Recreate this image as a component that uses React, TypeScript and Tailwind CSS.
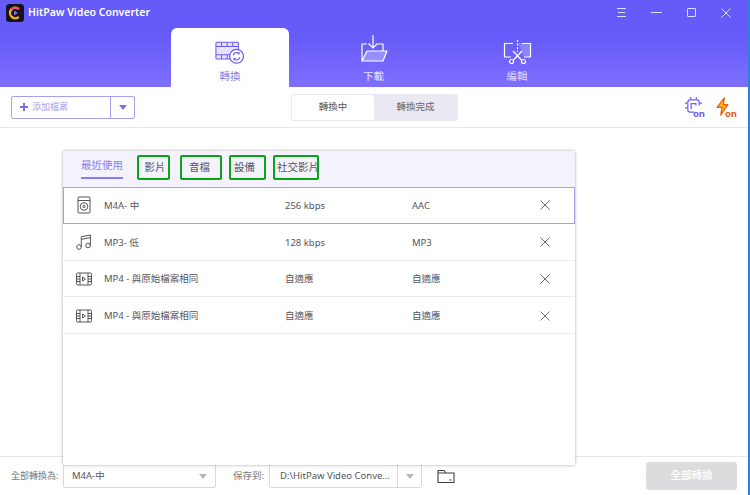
import React from "react";

const font = { fontFamily: '"Noto Sans", "Noto Sans CJK TC", sans-serif' };

function Logo() {
  return (
    <svg width="18" height="18" viewBox="0 0 18 18">
      <rect width="18" height="18" rx="3.5" fill="#15131c" />
      <path d="M12.8 5.2A5.2 5.2 0 1 0 12.8 12.8" fill="none" stroke="#f6b21b" strokeWidth="2.4" />
      <path d="M12.8 5.2A5.2 5.2 0 0 0 5 5.6" fill="none" stroke="#ef4a6a" strokeWidth="2.4" />
      <path d="M8 6.6L12 9L8 11.4Z" fill="#8a6cff" />
    </svg>
  );
}

function ConvertIcon() {
  return (
    <svg width="30" height="25" viewBox="0 0 32 26" fill="none" stroke="#6a5cf0" strokeWidth="1.1">
      <rect x="1" y="2" width="24" height="18" rx="1" fill="#e6e3fd" />
      <path d="M1 6.5H25M1 15.5H25M7 2V6.5M13 2V6.5M19 2V6.5M7 15.5V20M13 15.5V20" />
      <circle cx="23" cy="17" r="7.4" fill="#fff" strokeWidth="1.4" />
      <path d="M19.5 16a3.6 3.6 0 0 1 6.2-1.8M26.5 18a3.6 3.6 0 0 1-6.2 1.8" strokeWidth="1.2" />
      <path d="M25.8 12.5V14.6H23.8M20.2 21.5V19.4H22.2" strokeWidth="1" />
    </svg>
  );
}

function DownloadIcon() {
  return (
    <svg width="28" height="28" viewBox="0 0 28 28" fill="none" stroke="#fff" strokeWidth="1.2">
      <path d="M7 16H27L23 26H2Z" fill="#fff" fillOpacity="0.28" stroke="none" />
      <path d="M13 0V13M8.5 8.5L13 13L17.5 8.5" />
      <path d="M7 9H2V26H23L27 16H7L2 26" strokeLinejoin="round" />
      <path d="M18 9H23V16" />
    </svg>
  );
}

function EditIcon() {
  return (
    <svg width="29" height="26" viewBox="0 0 29 26" fill="none" stroke="#fff" strokeWidth="1.2">
      <path d="M15 4H28V18H21" fill="#fff" fillOpacity="0.22" stroke="none" />
      <path d="M10 4.5H1.5V18H8M19 4.5H27.5V18H21" />
      <path d="M14.5 1V13" strokeDasharray="2 1.6" />
      <path d="M10 12L18.5 21M19 12L10.5 21" />
      <circle cx="8.5" cy="22.5" r="2" />
      <circle cx="20.5" cy="22.5" r="2" />
    </svg>
  );
}

function ChipOn() {
  return (
    <div className="relative h-[24px] w-[21px]">
      <svg width="19" height="19" viewBox="0 0 20 20" fill="none" stroke="#6d5ff0" strokeWidth="1.3" className="absolute left-0 top-[1px]">
        <path d="M11 17H6.5A2.5 2.5 0 0 1 4 14.5V6.5A2.5 2.5 0 0 1 6.5 4H13.5A2.5 2.5 0 0 1 16 6.5V10" />
        <path d="M7.5 14V8H12.5V10M7 1V3.5M13 1V3.5M1 7.5H3.5M1 12.5H3.5M16.5 7.5H19" />
      </svg>
      <span className="absolute bottom-[1px] right-0 text-[9.5px] font-bold leading-none text-[#6d5ff0]">on</span>
    </div>
  );
}

function BoltOn() {
  return (
    <div className="relative h-[24px] w-[21px]">
      <svg width="13" height="19" viewBox="0 0 14 21" className="absolute left-0 top-[2px]">
        <path d="M9 1L1 11.5H6.5L5 20L13 8.5H8Z" fill="#fbb317" stroke="#f0590f" strokeWidth="1.3" strokeLinejoin="round" />
      </svg>
      <span className="absolute bottom-[1px] right-0 text-[9.5px] font-bold leading-none text-[#ee5a0e]">on</span>
    </div>
  );
}

function DiscIcon() {
  return (
    <svg width="14" height="18" viewBox="0 0 14 18" fill="none" stroke="#55555c" strokeWidth="1">
      <rect x="1" y="1" width="12" height="16" rx="1" />
      <path d="M1 4.5H13" />
      <circle cx="7" cy="10.5" r="3.8" />
      <circle cx="7" cy="10.5" r="1.1" />
    </svg>
  );
}

function MusicIcon() {
  return (
    <svg width="16" height="16" viewBox="0 0 16 16" fill="none" stroke="#55555c" strokeWidth="1">
      <circle cx="3" cy="13" r="2.3" />
      <circle cx="12" cy="11.5" r="2.3" />
      <path d="M5.3 13V2.8L14.4 1V11.5M5.3 5.4L14.4 3.6" />
    </svg>
  );
}

function VideoIcon() {
  return (
    <svg width="16" height="14" viewBox="0 0 16 14" fill="none" stroke="#55555c" strokeWidth="1">
      <rect x="0.5" y="1" width="15" height="12" rx="1.2" />
      <path d="M4 1V13M12 1V13M0.5 4.5H4M0.5 7H4M0.5 9.5H4M12 4.5H15.5M12 7H15.5M12 9.5H15.5" />
      <path d="M6.5 5L9.5 7L6.5 9Z" />
    </svg>
  );
}

function CloseIcon({ color = "#6b6b70", size = 10 }: { color?: string; size?: number }) {
  return (
    <svg width={size} height={size} viewBox="0 0 10 10" stroke={color} strokeWidth="1">
      <path d="M0.5 0.5L9.5 9.5M9.5 0.5L0.5 9.5" />
    </svg>
  );
}

function Caret({ color = "#9a9aa0" }: { color?: string }) {
  return (
    <svg width="8" height="5" viewBox="0 0 8 5">
      <path d="M0 0H8L4 5Z" fill={color} />
    </svg>
  );
}

const rows = [
  { icon: <DiscIcon />, name: "M4A- 中", rate: "256 kbps", codec: "AAC", active: true },
  { icon: <MusicIcon />, name: "MP3- 低", rate: "128 kbps", codec: "MP3" },
  { icon: <VideoIcon />, name: "MP4 - 與原始檔案相同", rate: "自適應", codec: "自適應" },
  { icon: <VideoIcon />, name: "MP4 - 與原始檔案相同", rate: "自適應", codec: "自適應" },
];

export default function App() {
  return (
    <div style={font} className="relative flex h-[495px] w-[750px] flex-col overflow-hidden border-r-2 border-[#2f80d8] bg-white">
      <header className="flex h-[87px] flex-col bg-gradient-to-b from-[#665af9] from-40% to-[#7f6fff]">
        <div className="mb-[3px] flex h-[25px] items-center pl-[6px]">
          <Logo />
          <span className="ml-[4px] text-[10.5px] font-semibold text-white">HitPaw Video Converter</span>
          <div className="ml-auto flex items-center">
            <div className="flex w-[35px] flex-col items-center gap-[3px] opacity-80">
              <span className="h-px w-[9px] self-center bg-white" />
              <span className="h-px w-[7px] self-center bg-white" />
              <span className="h-px w-[9px] self-center bg-white" />
            </div>
            <div className="flex w-[35px] justify-center opacity-80"><span className="h-px w-[11px] bg-white" /></div>
            <div className="flex w-[35px] justify-center opacity-80"><span className="h-[9px] w-[9px] rounded-[1px] border border-white" /></div>
            <div className="flex w-[35px] justify-center pr-px opacity-80"><CloseIcon color="#ffffff" /></div>
            <span className="w-[4px]" />
          </div>
        </div>
        <nav className="flex flex-1 gap-[25.5px] pl-[171px]">
          <div className="flex w-[118px] flex-col items-center rounded-t-[6px] bg-white pt-[12px]">
            <ConvertIcon />
            <span className="mt-[4px] text-[10.5px] leading-[14px] text-[#8a7fe8]">轉換</span>
          </div>
          <div className="flex w-[118px] flex-col items-center pt-[7px]">
            <DownloadIcon />
            <span className="mt-[6px] text-[10.5px] leading-[14px] text-white/80">下載</span>
          </div>
          <div className="flex w-[118px] flex-col items-center pt-[11px]">
            <EditIcon />
            <span className="mt-[4px] text-[10.5px] leading-[14px] text-white/75">編輯</span>
          </div>
        </nav>
      </header>

      <div className="flex h-[41px] items-center border-b border-[#e6e6e9] pl-[11px]">
        <div className="flex h-[23px] w-[124px] rounded-[2px] border border-[#a79ff0]">
          <div className="flex flex-1 items-center gap-[4px] border-r border-[#a79ff0] pl-[8px]">
            <span className="relative h-[8px] w-[8px]">
              <span className="absolute left-0 top-[3px] h-[2px] w-[8px] bg-[#7b6ee8]" />
              <span className="absolute left-[3px] top-0 h-[8px] w-[2px] bg-[#7b6ee8]" />
            </span>
            <span className="text-[9px] text-[#a7a0ea]">添加檔案</span>
          </div>
          <div className="flex w-[23px] items-center justify-center"><Caret color="#7b6ee8" /></div>
        </div>
        <div className="ml-[156px] flex h-[27px] w-[167px] rounded-[3px] bg-[#e9e8f3] p-px">
          <div className="flex w-[82px] items-center justify-center rounded-[2px] bg-white text-[9.5px] text-[#55555c]">轉換中</div>
          <div className="flex flex-1 items-center justify-center text-[9.5px] text-[#66666c]">轉換完成</div>
        </div>
        <div className="ml-auto flex gap-[11px] pr-[11px]">
          <ChipOn />
          <BoltOn />
        </div>
      </div>

      <div className="flex-1" />

      <footer className="flex h-[39px] items-center border-t border-[#e6e6e9] pl-[11px]">
        <span className="w-[52px] text-[9px] text-[#77777c]">全部轉換為:</span>
        <div className="flex h-[24px] w-[153px] items-center rounded-[2px] border border-[#d9d9dc] px-[8px] text-[9.5px] text-[#55555c]">
          M4A-中
          <span className="ml-auto"><Caret color="#b5b5ba" /></span>
        </div>
        <span className="ml-[17px] w-[36px] text-[9.5px] text-[#77777c]">保存到:</span>
        <div className="flex h-[24px] w-[153px] items-center rounded-[2px] border border-[#d9d9dc] text-[9.5px] text-[#55555c]">
          <span className="flex-1 truncate pl-[10px]">D:\HitPaw Video Conve...</span>
          <span className="flex h-full w-[24px] shrink-0 items-center justify-center border-l border-[#d9d9dc]"><Caret color="#b5b5ba" /></span>
        </div>
        <svg width="18" height="15" viewBox="0 0 18 15" fill="none" stroke="#3f3f45" strokeWidth="1.1" className="ml-[15px]">
          <path d="M1 13.5V1.5H7L9 4H17V13.5Z" />
          <path d="M1 4H9M12.5 11H14.5" />
        </svg>
        <button className="ml-auto mr-[11px] h-[28px] w-[91px] rounded-[3px] bg-[#dcdcde] text-[10.5px] font-medium text-white">全部轉換</button>
      </footer>

      <section className="absolute left-[63px] top-[151px] flex h-[314px] w-[512px] flex-col bg-white shadow-[0_0_3px_rgba(0,0,0,0.35)]">
        <div className="relative flex h-[36px] shrink-0 items-start bg-[#f3f2fd] pt-[4px] text-[10.5px] text-[#55555c]">
          <span className="ml-[18px] flex h-[24px] flex-col items-center justify-center border-b-2 border-[#8a7cf2] text-[#8a7cf2]">最近使用</span>
          <span className="ml-[14px] flex h-[25px] w-[33px] items-center justify-center rounded-[2px] border-2 border-[#0aa515] pl-[3px]">影片</span>
          <span className="ml-[10px] flex h-[25px] w-[42px] items-center justify-center rounded-[2px] border-2 border-[#0aa515] pr-[3px]">音檔</span>
          <span className="ml-[7px] flex h-[25px] w-[37px] items-center justify-center rounded-[2px] border-2 border-[#0aa515] pr-[6px]">設備</span>
          <span className="ml-[7px] flex h-[25px] w-[46px] items-center justify-start whitespace-nowrap rounded-[2px] border-2 border-[#0aa515] pl-[2px]">社交影片</span>
        </div>
        {rows.map((r, i) => (
          <div
            key={i}
            className={
              "flex h-[36.8px] shrink-0 items-center border text-[9.5px] text-[#55555c] " +
              (r.active ? "border-[#a99fe6]" : "border-x-transparent border-t-transparent border-b-[#ececef]")
            }
          >
            <span className="flex w-[40px] shrink-0 justify-center">{r.icon}</span>
            <span className="w-[181px] shrink-0 pt-[1px]">{r.name}</span>
            <span className="w-[127px] shrink-0 pt-[1px]">{r.rate}</span>
            <span className="w-[128px] shrink-0 pt-[1px]">{r.codec}</span>
            <CloseIcon />
          </div>
        ))}
      </section>
    </div>
  );
}
